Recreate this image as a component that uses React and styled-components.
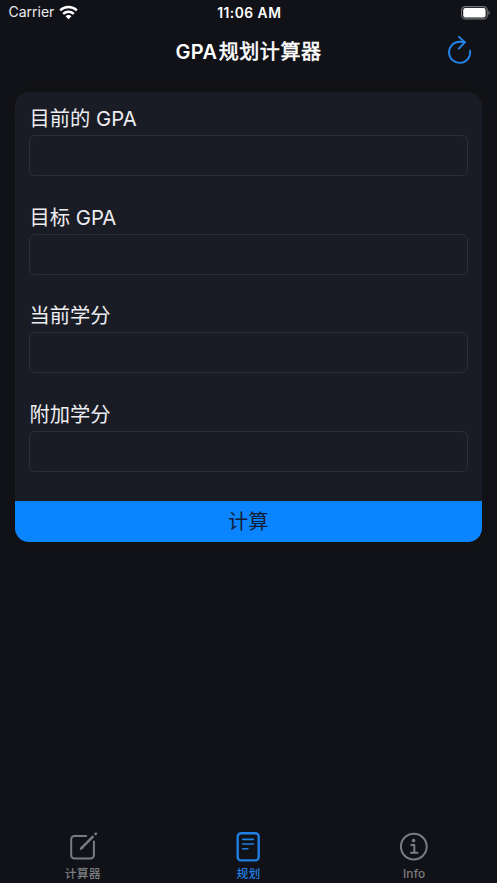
import React from "react";
import styled, { createGlobalStyle } from "styled-components";

const GlobalStyle = createGlobalStyle`
  * { box-sizing: border-box; }
  body { margin: 0; background: #111217; }
`;

const Screen = styled.div`
  display: flex;
  flex-direction: column;
  height: 883px;
  overflow: hidden;
  background: #111217;
  color: #fff;
  font-family: Inter, "Noto Sans CJK SC", sans-serif;
`;

const StatusBar = styled.div`
  display: grid;
  grid-template-columns: 1fr auto 1fr;
  align-items: center;
  height: 25px;
  padding: 0 7px 0 8.5px;
  font-size: 14px;
  line-height: 24px;
`;

const Carrier = styled.div`
  display: flex;
  align-items: center;
  gap: 5px;
  padding-bottom: 1px;
  color: #ececee;
`;

const Time = styled.div`
  font-size: 13.8px;
  font-weight: 600;
  letter-spacing: 0.5px;
`;

const Battery = styled.div`
  display: flex;
  justify-content: flex-end;
`;

const NavBar = styled.header`
  display: grid;
  grid-template-columns: 1fr auto 1fr;
  align-items: center;
  height: 51px;
  padding: 0 24px;
`;

const Title = styled.h1`
  grid-column: 2;
  display: flex;
  gap: 1.5px;
  margin: 0;
  padding-top: 2px;
  font-size: 20px;
  line-height: 30px;
  font-weight: 600;
  letter-spacing: 0.3px;
`;

const TitleText = styled.span`
  font-weight: 400;
  letter-spacing: 0.55px;
  -webkit-text-stroke: 0.55px currentColor;
`;

const RefreshButton = styled.button`
  justify-self: end;
  display: flex;
  padding: 0;
  border: 0;
  background: none;
  color: #2384e8;
`;

const Main = styled.main`
  flex: 1;
  padding: 16px 15px 0 14.5px;
`;

const Card = styled.form`
  display: flex;
  flex-direction: column;
  height: 449.5px;
  overflow: hidden;
  border-radius: 14px;
  background: #1a1c25;
  box-shadow: 0 0 12px rgba(20, 20, 20, 0.9);
`;

const Fields = styled.div`
  display: flex;
  flex: 1;
  flex-direction: column;
  gap: 27.7px;
  padding: 13px 14px 0 14.5px;
`;

const Field = styled.label`
  display: flex;
  flex-direction: column;
  height: 71px;
`;

const Label = styled.span`
  height: 30px;
  padding-left: 0.5px;
  color: #ededf0;
  font-size: 20.3px;
  line-height: 27px;
`;

const Input = styled.input`
  width: 100%;
  height: 41px;
  padding: 0 10px;
  border: 1px solid #2c2e36;
  border-radius: 6px;
  outline: none;
  background: transparent;
  color: #fff;
  font: inherit;
`;

const SubmitButton = styled.button`
  height: 40.5px;
  padding: 1px 0 0;
  border: 0;
  background: #0b84ff;
  color: #111e35;
  font-family: inherit;
  font-size: 20.2px;
  line-height: 40px;
`;

const TabBar = styled.nav`
  display: grid;
  grid-template-columns: repeat(3, 1fr);
  height: 55px;
`;

const Tab = styled.button`
  display: flex;
  flex-direction: column;
  align-items: center;
  justify-content: flex-start;
  padding: 3.5px 0 0;
  border: 0;
  background: none;
  color: ${({ $active }) => ($active ? "#1f7fe2" : "#7b7c80")};
  font-family: inherit;
  font-size: 11.8px;
  line-height: 18px;
  font-weight: 500;
  letter-spacing: 0.2px;

  svg { display: block; margin-bottom: 3px; }
`;

const WifiIcon = () => (
  <svg width="19" height="15" viewBox="0 0 20 15" preserveAspectRatio="none" fill="none" stroke="#fff" strokeWidth="2.6">
    <path d="M1.2 5.4C6.2.9 13.8.9 18.8 5.4" />
    <path d="M4.4 8.9c3.1-2.8 8.1-2.8 11.2 0" />
    <path d="M10 14.2 6.9 11.3c1.6-1.7 4.6-1.7 6.2 0Z" fill="#fff" stroke="none" />
  </svg>
);

const BatteryIcon = () => (
  <svg width="30" height="14" viewBox="0 0 30 14">
    <rect x="1.6" y="0.6" width="25.6" height="12.3" rx="3.7" fill="none" stroke="#77787b" strokeWidth="1.1" />
    <rect x="3.2" y="2.1" width="22.4" height="9.3" rx="2" fill="#fff" />
    <path d="M28.4 4.8c1.8.6 1.8 3.5 0 4.1Z" fill="#77787b" />
  </svg>
);

const RefreshIcon = () => (
  <svg width="26" height="30" viewBox="0 0 26 30" fill="none" stroke="currentColor" strokeWidth="1.9" strokeLinecap="round" strokeLinejoin="round">
    <path d="M23.1 14.8A10.6 10.6 0 1 1 12.5 5.7Q15.5 5.7 17.8 6.2" />
    <path d="m12 0.9 5.8 5.4-6 6.3" />
  </svg>
);

const ComposeIcon = () => (
  <svg width="30" height="30" viewBox="0 0 30 30" fill="none" stroke="currentColor" strokeWidth="2" strokeLinecap="round" strokeLinejoin="round">
    <path d="M18.2 3.9H6.5a3.3 3.3 0 0 0-3.3 3.3v16.1a3.3 3.3 0 0 0 3.3 3.3h16.1a3.3 3.3 0 0 0 3.3-3.3V9.5" />
    <path d="M25.4 4.2 13.2 16.4" strokeWidth="2.5" strokeLinecap="butt" />
    <path d="m13.6 14.5-1.6 3.2 3.2-1.6" strokeWidth="1" fill="currentColor" />
    <path d="m27.5 2 .4-.4" strokeWidth="2.5" />
  </svg>
);

const PlanIcon = () => (
  <svg width="30" height="30" viewBox="0 0 30 30" fill="none" stroke="currentColor" strokeLinecap="round">
    <rect x="4.7" y="1.2" width="21" height="27.2" rx="3.4" strokeWidth="2.4" />
    <path d="M9.7 7.4h10.7M9.7 12h10.7M9.7 16.7h5.2" strokeWidth="1.6" />
  </svg>
);

const InfoIcon = () => (
  <svg width="30" height="30" viewBox="0 0 30 30" fill="none" stroke="currentColor">
    <circle cx="14.8" cy="14.6" r="12.9" strokeWidth="2" />
    <circle cx="14.6" cy="8.6" r="1.8" fill="currentColor" stroke="none" />
    <path d="M12.3 12.9h3v7.9M11.9 20.8h6.5" strokeWidth="2" strokeLinecap="round" strokeLinejoin="round" />
  </svg>
);

const fields = ["目前的 GPA", "目标 GPA", "当前学分", "附加学分"];

const tabs = [
  { label: "计算器", Icon: ComposeIcon },
  { label: "规划", Icon: PlanIcon, active: true },
  { label: "Info", Icon: InfoIcon },
];

export default function App() {
  return (
    <Screen>
      <GlobalStyle />
      <StatusBar>
        <Carrier>Carrier <WifiIcon /></Carrier>
        <Time>11:06 AM</Time>
        <Battery><BatteryIcon /></Battery>
      </StatusBar>
      <NavBar>
        <Title>GPA<TitleText>规划计算器</TitleText></Title>
        <RefreshButton type="button" aria-label="刷新"><RefreshIcon /></RefreshButton>
      </NavBar>
      <Main>
        <Card onSubmit={(event) => event.preventDefault()}>
          <Fields>
            {fields.map((label) => (
              <Field key={label}>
                <Label>{label}</Label>
                <Input inputMode="decimal" />
              </Field>
            ))}
          </Fields>
          <SubmitButton>计算</SubmitButton>
        </Card>
      </Main>
      <TabBar>
        {tabs.map(({ label, Icon, active }) => (
          <Tab key={label} type="button" $active={active}>
            <Icon />
            {label}
          </Tab>
        ))}
      </TabBar>
    </Screen>
  );
}
